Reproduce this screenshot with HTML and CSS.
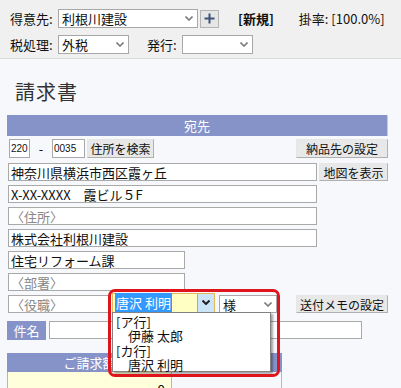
FILE: index.html
```html
<!DOCTYPE html>
<html lang="ja">
<head>
    <meta charset="UTF-8">
    <title>請求書</title>
    <link rel="stylesheet" href="styles.css">
</head>
<body>
    <div class="toolbar">
        <div class="tb-row">
            <span class="tb-label">得意先:</span>
            <div class="select customer">
                <span>利根川建設</span>
                <svg class="chev" viewBox="0 0 8 5"><polyline points="0.5,0.5 4,4 7.5,0.5"/></svg>
            </div>
            <button class="plus">
                <svg viewBox="0 0 11 11"><path d="M5.5 0.5v10M0.5 5.5h10"/></svg>
            </button>
            <span class="mode">[新規]</span>
            <span class="rate">掛率: [100.0%]</span>
        </div>
        <div class="tb-row">
            <span class="tb-label">税処理:</span>
            <div class="select small">
                <span>外税</span>
                <svg class="chev" viewBox="0 0 8 5"><polyline points="0.5,0.5 4,4 7.5,0.5"/></svg>
            </div>
            <span class="tb-label issue">発行:</span>
            <div class="select small">
                <span></span>
                <svg class="chev" viewBox="0 0 8 5"><polyline points="0.5,0.5 4,4 7.5,0.5"/></svg>
            </div>
        </div>
    </div>

    <div class="main">
        <h1 class="title">請求書</h1>

        <div class="bar">宛先</div>

        <div class="zip-row">
            <div class="zip">
                <input class="field zip1" value="220">
                <span class="dash">-</span>
                <input class="field zip2" value="0035">
                <button class="btn search">住所を検索</button>
            </div>
            <button class="btn wide">納品先の設定</button>
        </div>

        <div class="row first">
            <input class="field addr" value="神奈川県横浜市西区霞ヶ丘">
            <button class="btn map">地図を表示</button>
        </div>
        <div class="row">
            <input class="field addr" value="X-XX-XXXX　霞ビル５F">
        </div>
        <div class="row">
            <input class="field addr" placeholder="〈住所〉">
        </div>
        <div class="row">
            <input class="field addr" value="株式会社利根川建設">
        </div>
        <div class="row">
            <input class="field dept" value="住宅リフォーム課">
        </div>
        <div class="row">
            <input class="field dept" placeholder="〈部署〉">
        </div>
        <div class="row role">
            <input class="field post" placeholder="〈役職〉">
            <div class="combo">
                <span class="combo-text"><span class="picked">唐沢 利明</span></span>
                <span class="combo-arrow">
                    <svg viewBox="0 0 8 5"><polyline points="0.5,0.5 4,4 7.5,0.5"/></svg>
                </span>
                <ul class="combo-list">
                    <li class="group">[ア行]</li>
                    <li>伊藤 太郎</li>
                    <li class="group">[カ行]</li>
                    <li>唐沢 利明</li>
                </ul>
            </div>
            <div class="select honor">
                <span>様</span>
                <svg class="chev" viewBox="0 0 8 5"><polyline points="0.5,0.5 4,4 7.5,0.5"/></svg>
            </div>
            <button class="btn wide memo">送付メモの設定</button>
            <div class="mark"></div>
        </div>

        <div class="subject-row">
            <span class="tag">件名</span>
            <input class="field subject">
        </div>

        <div class="amount">
            <div class="amount-head">
                <div class="cell first-col">ご請求額</div>
                <div class="cell second-col">消費税額</div>
            </div>
            <div class="amount-body">
                <div class="cell first-col total">0</div>
                <div class="cell second-col"></div>
            </div>
        </div>
    </div>
</body>
</html>
```

FILE: styles.css
```css
* {
    margin: 0;
    padding: 0;
    box-sizing: border-box;
}

body {
    font-family: "Noto Sans CJK JP", "Noto Sans", sans-serif;
    font-size: 13px;
    color: #111;
    background: #f7f8fc;
    width: 401px;
    height: 388px;
    overflow: hidden;
}

input,
button {
    font-family: inherit;
    font-size: 13px;
    color: #111;
}

/* toolbar */
.toolbar {
    height: 59px;
    background: #f0f0f0;
    border-bottom: 1px solid #dadada;
    padding: 9px 0 0 10px;
    display: flex;
    flex-direction: column;
    gap: 7px;
}

.tb-row {
    display: flex;
    align-items: center;
    height: 19px;
}

.tb-label {
    width: 48px;
    line-height: 19px;
}

.tb-label.issue {
    width: 35px;
    margin-left: 18px;
}

.select {
    height: 19px;
    border: 1px solid #a8a8a8;
    background: #fff;
    display: flex;
    align-items: center;
    justify-content: space-between;
    padding: 0 4px 0 3px;
    line-height: 17px;
}

.select.customer {
    width: 140px;
}

.select.small {
    width: 71px;
}

.chev {
    width: 8px;
    height: 5px;
    fill: none;
    stroke: #7d7d7d;
    stroke-width: 1.6;
}

.plus {
    width: 19px;
    height: 18px;
    margin-left: 2px;
    background: #e6e6e6;
    border: 1px solid #b4b4b4;
    display: flex;
    align-items: center;
    justify-content: center;
}

.plus svg {
    width: 11px;
    height: 11px;
    stroke: #3d5378;
    stroke-width: 2;
}

.mode {
    margin-left: 19px;
    font-weight: bold;
}

.rate {
    margin-left: 25px;
}

/* main area */
.main {
    width: 395px;
    padding-left: 7px;
}

.title {
    font-size: 20px;
    font-weight: normal;
    line-height: 24px;
    color: #333;
    margin: 21px 0 11px 8px;
    letter-spacing: 1px;
}

.bar {
    width: 381px;
    height: 21px;
    line-height: 21px;
    background: #8693c8;
    border-right: 1px solid #c4cae6;
    color: #fff;
    text-align: center;
}

.field {
    height: 18px;
    border: 1px solid #a9a9a9;
    background: #fff;
    padding: 0 2px;
    line-height: 16px;
    outline: none;
}

.field::placeholder {
    color: #888;
}

.btn {
    height: 19px;
    padding: 0;
    font-size: 12px;
    white-space: nowrap;
    text-align: center;
    background: #e8e8e8;
    border: 1px solid #b0b0b0;
    border-top-color: #e6e6e6;
    border-left-color: #e6e6e6;
    line-height: 17px;
}

.zip-row {
    width: 381px;
    margin-top: 3px;
    height: 19px;
    display: flex;
    align-items: center;
    justify-content: space-between;
}

.zip {
    display: flex;
    align-items: center;
}

.zip .field {
    height: 19px;
    font-family: "Liberation Sans", sans-serif;
    font-size: 10px;
    padding: 0 1px;
}

.zip1 {
    width: 21px;
    margin-left: 2px;
}

.dash {
    width: 22px;
    text-align: center;
}

.zip2 {
    width: 33px;
}

.btn.search {
    width: 67px;
    margin-left: 2px;
}

.btn.wide {
    width: 92px;
}

.row {
    display: flex;
    align-items: center;
    height: 18px;
    margin-top: 4px;
}

.row.first {
    margin-top: 5px;
}

.field.addr {
    width: 309px;
    margin-left: 1px;
}

.btn.map {
    width: 69px;
    height: 18px;
    margin-left: 2px;
}

.field.dept {
    width: 177px;
    margin-left: 1px;
}

/* role row with the open combobox */
.row.role {
    position: relative;
    width: 381px;
}

.field.post {
    width: 101px;
    margin-left: 1px;
}

.combo {
    position: relative;
    width: 103px;
    height: 20px;
    margin-left: 3px;
    margin-top: -3px;
    border: 1px solid #e2b85c;
    background: #ffffc4;
    display: flex;
    align-items: stretch;
}

.combo-text {
    flex: 1;
    padding: 1px 2px;
    line-height: 16px;
}

.picked {
    background: #3399ff;
    color: #fff;
    padding: 0 1px;
}

.combo-arrow {
    width: 17px;
    background: #cce4f8;
    border-left: 1px solid #7eb4ea;
    display: flex;
    align-items: center;
    justify-content: center;
}

.combo-arrow svg {
    width: 8px;
    height: 5px;
    fill: none;
    stroke: #222;
    stroke-width: 2;
}

.combo-list {
    position: absolute;
    top: 18px;
    left: -1px;
    width: 159px;
    height: 60px;
    list-style: none;
    background: #fff;
    border: 1px solid #828282;
    box-shadow: 2px 2px 2px rgba(0, 0, 0, 0.35);
    padding: 2px 0 0 3px;
    z-index: 2;
}

.combo-list li {
    height: 14.5px;
    line-height: 14.5px;
    padding-left: 12px;
}

.combo-list li.group {
    padding-left: 0;
}

.select.honor {
    width: 58px;
    height: 18px;
    margin-left: 4px;
}

.btn.memo {
    height: 18px;
    margin-left: auto;
}

.mark {
    position: absolute;
    left: 101px;
    top: -6px;
    width: 172px;
    height: 88px;
    border: 3px solid #e0141b;
    border-radius: 7px;
    z-index: 3;
    pointer-events: none;
}

/* subject */
.subject-row {
    display: flex;
    align-items: center;
    margin-top: 8px;
    height: 19px;
}

.tag {
    width: 39px;
    height: 19px;
    line-height: 19px;
    background: #8693c8;
    color: #fff;
    text-align: center;
}

.field.subject {
    width: 313px;
    height: 18px;
    margin-left: 3px;
    margin-top: -1px;
}

/* amount table */
.amount {
    width: 275px;
    margin-top: 13px;
}

.amount-head,
.amount-body {
    display: flex;
}

.amount-head .cell {
    height: 19px;
    line-height: 19px;
    background: #8693c8;
    color: #fff;
    text-align: center;
}

.first-col {
    width: 165px;
}

.second-col {
    width: 110px;
}

.amount-body .cell {
    height: 30px;
    border: 1px solid #b8b8b8;
    border-top: none;
}

.amount-body .total {
    background: #ffffdc;
    text-align: right;
    padding: 8px 6px 0 0;
    font-size: 14px;
}

.amount-body .second-col {
    border-left: none;
}
```
